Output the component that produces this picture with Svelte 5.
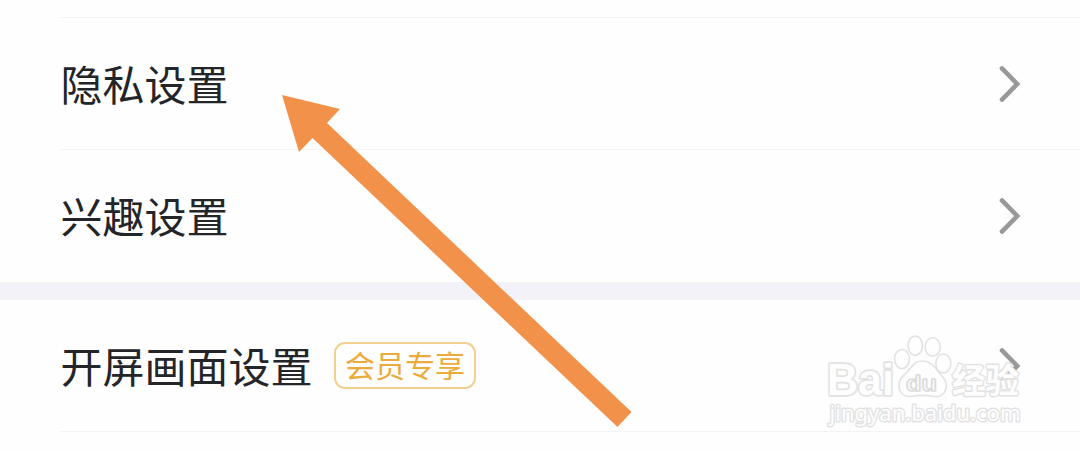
<script lang="ts">
	type Row = { label: string; badge?: string };

	const groups: Row[][] = [
		[{ label: '隐私设置' }, { label: '兴趣设置' }],
		[{ label: '开屏画面设置', badge: '会员专享' }]
	];
</script>

<main class="settings">
	<div class="previous"></div>
	{#each groups as rows}
		<section class="group">
			{#each rows as row}
				<div class="row">
					<span class="label">{row.label}</span>
					{#if row.badge}
						<span class="badge">{row.badge}</span>
					{/if}
					<svg class="chevron" viewBox="0 0 24 38" width="24" height="38">
						<path d="M4 3.4 19.2 19 4 34.6" />
					</svg>
				</div>
			{/each}
		</section>
	{/each}

	<svg class="pointer" viewBox="0 0 350 332" width="350" height="332">
		<path d="M0 0 58 14 45 28 349.5 317 335.5 332 30.5 43 17 57Z" />
	</svg>

	<svg class="watermark" viewBox="0 0 220 115" width="220" height="115">
		<g class="paw">
			<ellipse cx="82" cy="34" rx="7.5" ry="9.5" />
			<ellipse cx="95.3" cy="20.7" rx="7.2" ry="9.7" />
			<ellipse cx="112.7" cy="22" rx="7.6" ry="9.3" />
			<ellipse cx="123.3" cy="38.5" rx="7.5" ry="9.5" />
			<path d="M102 36C95 36 92 41 88 46C83 51 78 55 79 62C80 69 85 72 91 71.5C99 70 106 70 114 71.5C121 72.5 126 68 126.5 61C127 54 121 51 117 45C113 39 109 36 102 36Z" />
		</g>
		<text class="brand" x="7" y="70" textLength="67" lengthAdjust="spacingAndGlyphs">Bai</text>
		<text class="du" x="86" y="65.5" textLength="31" lengthAdjust="spacingAndGlyphs">du</text>
		<text class="cjk" x="132" y="67.5" textLength="67" lengthAdjust="spacingAndGlyphs">经验</text>
		<text class="url" x="9.5" y="96" textLength="191" lengthAdjust="spacingAndGlyphs">jingyan.baidu.com</text>
	</svg>
</main>

<style>
	:global(body) {
		background: #fefefe;
	}

	.settings {
		position: relative;
		width: 1080px;
		height: 451px;
		overflow: hidden;
		background: #fefefe;
		font-family: 'Noto Sans CJK SC', sans-serif;
		color: #242529;
	}

	.previous {
		height: 17px;
		margin-left: 60px;
		border-bottom: 1px solid #f3f3f4;
	}

	.group + .group {
		border-top: 18px solid #f2f2f8;
	}

	.row {
		display: flex;
		align-items: center;
		box-sizing: border-box;
		height: 132px;
		margin-left: 60px;
		padding-right: 58px;
		border-bottom: 1px solid #f3f3f4;
	}

	.group:not(:last-of-type) .row:last-child {
		border-bottom-color: transparent;
	}

	.label {
		padding: 0 0 1px 0.5px;
		font-size: 42px;
		line-height: 60px;
	}

	.badge {
		box-sizing: border-box;
		width: 142px;
		height: 47px;
		margin-left: 21.5px;
		border: 2px solid #f3d08f;
		border-radius: 11px;
		font-size: 30px;
		line-height: 41px;
		text-align: center;
		color: #eaab3c;
	}

	.chevron {
		margin-left: auto;
	}

	.chevron path {
		fill: none;
		stroke: #999;
		stroke-width: 4.6;
		stroke-linecap: round;
	}

	.pointer {
		position: absolute;
		left: 282px;
		top: 95px;
		fill: #f29149;
	}

	.watermark {
		position: absolute;
		left: 820px;
		top: 325px;
		overflow: visible;
		fill: #fefefe;
		stroke: #e2e2e2;
		stroke-width: 1.6;
		stroke-linejoin: round;
	}

	.watermark text {
		paint-order: stroke;
		stroke-width: 2.8;
	}

	.watermark .brand {
		stroke-width: 3.4;
		font: 700 44px 'Liberation Sans', sans-serif;
	}

	.watermark .du {
		stroke: #dcdcdc;
		stroke-width: 1.6;
		paint-order: normal;
		font: 700 22px 'Liberation Sans', sans-serif;
	}

	.cjk {
		font: 700 34px 'Noto Sans CJK SC', sans-serif;
	}

	.url {
		font: 400 22px 'Noto Sans', sans-serif;
	}
</style>
